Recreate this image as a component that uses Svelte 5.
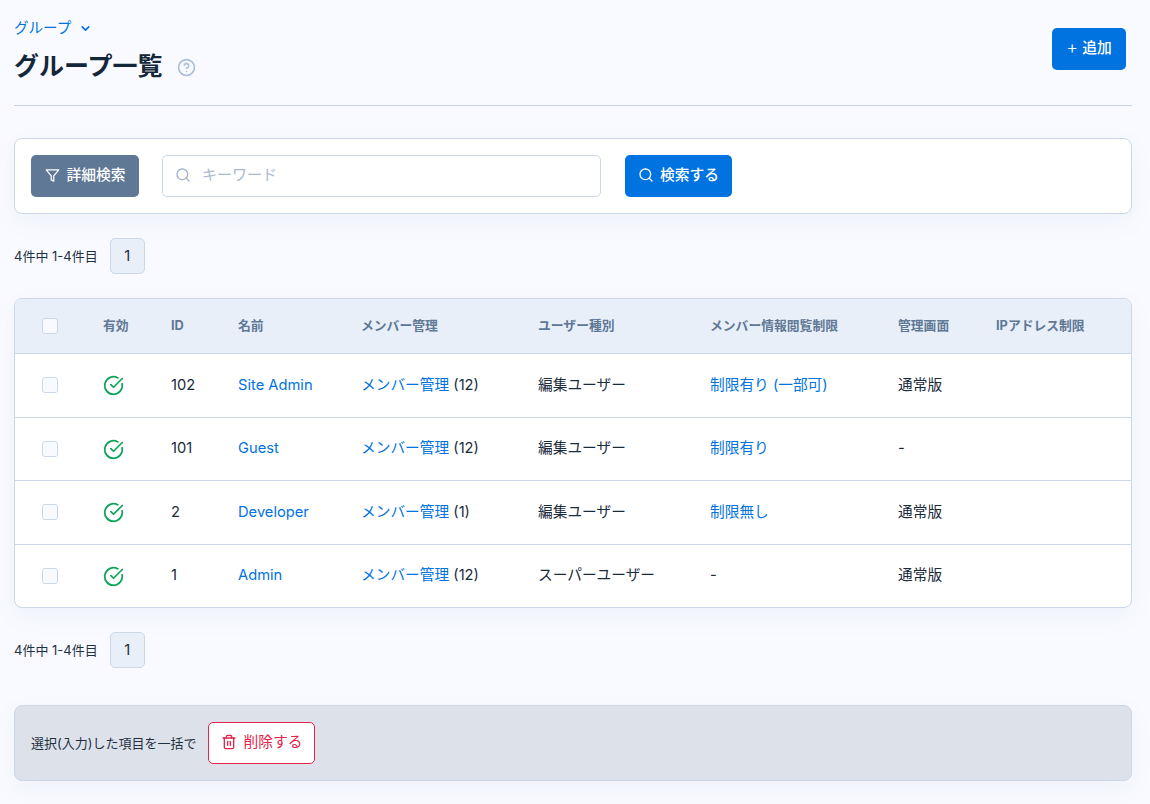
<script>
  const groups = [
    { id: 102, name: "Site Admin", members: 12, type: "編集ユーザー", limit: "制限有り (一部可)", admin: "通常版" },
    { id: 101, name: "Guest", members: 12, type: "編集ユーザー", limit: "制限有り", admin: "-" },
    { id: 2, name: "Developer", members: 1, type: "編集ユーザー", limit: "制限無し", admin: "通常版" },
    { id: 1, name: "Admin", members: 12, type: "スーパーユーザー", limit: "", admin: "通常版" }
  ];
  const widths = [74, 68, 67, 123, 177, 172, 188, 98, 149];
</script>

{#snippet searchIcon(size)}
  <svg width={size} height={size} viewBox="0 0 24 24" fill="none" stroke="currentColor" stroke-width="2" stroke-linecap="round" stroke-linejoin="round">
    <circle cx="11" cy="11" r="8" /><path d="m21 21-4.3-4.3" />
  </svg>
{/snippet}

{#snippet pager()}
  <div class="pager">
    <span class="count">4件中 1-4件目</span>
    <span class="page">1</span>
  </div>
{/snippet}

<div class="page-wrap">
  <header class="head">
    <div>
      <a class="crumb" href="#top">グループ
        <svg width="13" height="13" viewBox="0 0 24 24" fill="none" stroke="currentColor" stroke-width="3" stroke-linecap="round" stroke-linejoin="round"><path d="m6 9 6 6 6-6" /></svg>
      </a>
      <div class="title-row">
        <h1>グループ一覧</h1>
        <svg class="help" width="19" height="19" viewBox="0 0 24 24" fill="none" stroke="currentColor" stroke-width="2" stroke-linecap="round" stroke-linejoin="round"><circle cx="12" cy="12" r="10" /><path d="M9.1 9a3 3 0 0 1 5.8 1c0 2-3 3-3 3" /><path d="M12 17h.01" /></svg>
      </div>
    </div>
    <button class="btn primary add"><span class="plus">+</span>追加</button>
  </header>

  <section class="search card">
    <button class="btn slate">
      <svg width="15" height="15" viewBox="0 0 24 24" fill="none" stroke="currentColor" stroke-width="2" stroke-linecap="round" stroke-linejoin="round"><path d="M22 3H2l8 9.46V19l4 2v-8.54z" /></svg>
      詳細検索
    </button>
    <div class="input">
      <span class="input-icon">{@render searchIcon(16)}</span>
      <span class="placeholder">キーワード</span>
    </div>
    <button class="btn primary find">{@render searchIcon(16)}検索する</button>
  </section>

  {@render pager()}

  <div class="table-card card">
    <table>
      <colgroup>
        {#each widths as w}<col style="width: {w}px" />{/each}
      </colgroup>
      <thead>
        <tr>
          <th class="check"><span class="box"></span></th>
          <th>有効</th>
          <th>ID</th>
          <th>名前</th>
          <th>メンバー管理</th>
          <th>ユーザー種別</th>
          <th>メンバー情報閲覧制限</th>
          <th>管理画面</th>
          <th>IPアドレス制限</th>
        </tr>
      </thead>
      <tbody>
        {#each groups as g}
          <tr>
            <td class="check"><span class="box"></span></td>
            <td class="state">
              <svg class="ok" width="21" height="21" viewBox="0 0 24 24" fill="none" stroke="currentColor" stroke-width="2" stroke-linecap="round" stroke-linejoin="round"><path d="M21.8 10A10 10 0 1 1 17 3.34" /><path d="m9 11 3 3L22 4" /></svg>
            </td>
            <td>{g.id}</td>
            <td><a href="#top">{g.name}</a></td>
            <td><a href="#top">メンバー管理</a> ({g.members})</td>
            <td>{g.type}</td>
            <td>
              {#if g.limit}<a href="#top">{g.limit}</a>{:else}-{/if}
            </td>
            <td>{g.admin}</td>
            <td></td>
          </tr>
        {/each}
      </tbody>
    </table>
  </div>

  {@render pager()}

  <section class="bulk card">
    <span class="bulk-label">選択(入力)した項目を一括で</span>
    <button class="btn danger">
      <svg width="16" height="16" viewBox="0 0 24 24" fill="none" stroke="currentColor" stroke-width="2" stroke-linecap="round" stroke-linejoin="round"><path d="M3 6h18" /><path d="M19 6v14a2 2 0 0 1-2 2H7a2 2 0 0 1-2-2V6" /><path d="M8 6V4a2 2 0 0 1 2-2h4a2 2 0 0 1 2 2v2" /><path d="M10 11v6" /><path d="M14 11v6" /></svg>
      削除する
    </button>
  </section>
</div>

<style>
  :global(body) {
    background: #f8faff;
    color: #1a2b3c;
    font-family: Inter, "Noto Sans CJK JP", sans-serif;
    line-height: 1.4;
  }

  .page-wrap {
    padding: 18px 18px 23px 14px;
  }

  .head {
    display: flex;
    justify-content: space-between;
    align-items: flex-start;
    height: 87px;
    border-bottom: 1px solid #cbd5e1;
    margin-bottom: 32px;
  }

  .crumb {
    display: flex;
    align-items: center;
    gap: 8px;
    height: 20px;
    font-size: 14.5px;
    line-height: 20px;
    color: #0073e0;
    text-decoration: none;
  }

  .title-row {
    display: flex;
    align-items: center;
    gap: 14px;
    margin-top: 7px;
  }

  h1 {
    margin: 0;
    font-size: 25px;
    line-height: 42px;
    font-weight: 700;
    color: #14273a;
  }

  .help {
    color: #a9bdd6;
    margin-top: 3px;
  }

  .btn {
    display: inline-flex;
    align-items: center;
    justify-content: center;
    gap: 7px;
    height: 42px;
    padding: 0 0 2px;
    border: none;
    border-radius: 5px;
    font-family: inherit;
    font-size: 14.75px;
    font-weight: 500;
    line-height: 1.4;
  }

  .primary {
    background: #0073e0;
    color: #fff;
  }

  .slate {
    background: #5f7896;
    color: #fff;
    width: 108px;
  }

  .add {
    width: 74px;
    margin-top: 10px;
    margin-right: 6px;
    gap: 4px;
  }

  .plus {
    font-size: 18px;
    font-weight: 300;
  }

  .find {
    width: 107px;
    margin-left: 24px;
    gap: 6px;
  }

  .card {
    border: 1px solid #cbd8e8;
    border-radius: 8px;
    box-shadow: 0 8px 24px rgba(100, 116, 139, 0.06);
  }

  .search {
    display: flex;
    align-items: center;
    height: 74px;
    padding: 0 16px;
    background: #fff;
  }

  .input {
    display: flex;
    align-items: center;
    width: 439px;
    height: 42px;
    margin-left: 23px;
    padding-left: 12px;
    box-sizing: border-box;
    background: #fff;
    border: 1px solid #cbd8e8;
    border-radius: 5px;
  }

  .input-icon {
    display: flex;
    margin-top: -2px;
    color: #9fb3cc;
  }

  .placeholder {
    margin: -3px 0 0 11px;
    font-size: 15px;
    color: #a9bbd1;
  }

  .pager {
    display: flex;
    align-items: center;
    gap: 12px;
    margin: 24px 0;
  }

  .count {
    font-size: 13px;
    color: #1f3042;
  }

  .page {
    display: flex;
    align-items: center;
    justify-content: center;
    width: 35px;
    height: 36px;
    box-sizing: border-box;
    background: #e8eff8;
    border: 1px solid #cbd8e8;
    border-radius: 5px;
    font-size: 14.75px;
  }

  .table-card {
    background: #fff;
    overflow: hidden;
  }

  table {
    width: 100%;
    table-layout: fixed;
    border-collapse: collapse;
    font-size: 14.7px;
  }

  th {
    height: 54px;
    padding: 0 0 0 14px;
    box-sizing: border-box;
    background: #e8eff8;
    color: #5f7896;
    font-size: 12.8px;
    font-weight: 700;
    text-align: left;
    white-space: nowrap;
  }

  td {
    height: 64px;
    padding: 0 0 0 14px;
    box-sizing: border-box;
    border-top: 1px solid #cbd8e8;
    color: #1a2b3c;
    white-space: nowrap;
  }

  tr:nth-child(even) td {
    height: 63px;
  }

  th.check,
  td.check {
    padding: 0 0 0 27px;
  }

  td a {
    color: #0073e0;
    text-decoration: none;
  }

  .box {
    display: block;
    width: 16px;
    height: 16px;
    box-sizing: border-box;
    background: #f8faff;
    border: 1px solid #cbd8e8;
    border-radius: 3px;
  }

  .ok {
    display: block;
    color: #0fa45c;
    margin: 1px 0 0 0;
  }

  .bulk {
    display: flex;
    align-items: center;
    gap: 12px;
    height: 74px;
    margin-top: 37px;
    padding: 0 16px;
    background: #dde1e9;
  }

  .bulk-label {
    font-size: 13px;
    color: #1f3042;
  }

  .danger {
    width: 107px;
    background: #fff;
    border: 1px solid #e5234b;
    color: #e5234b;
    font-weight: 400;
    gap: 6px;
  }
</style>
